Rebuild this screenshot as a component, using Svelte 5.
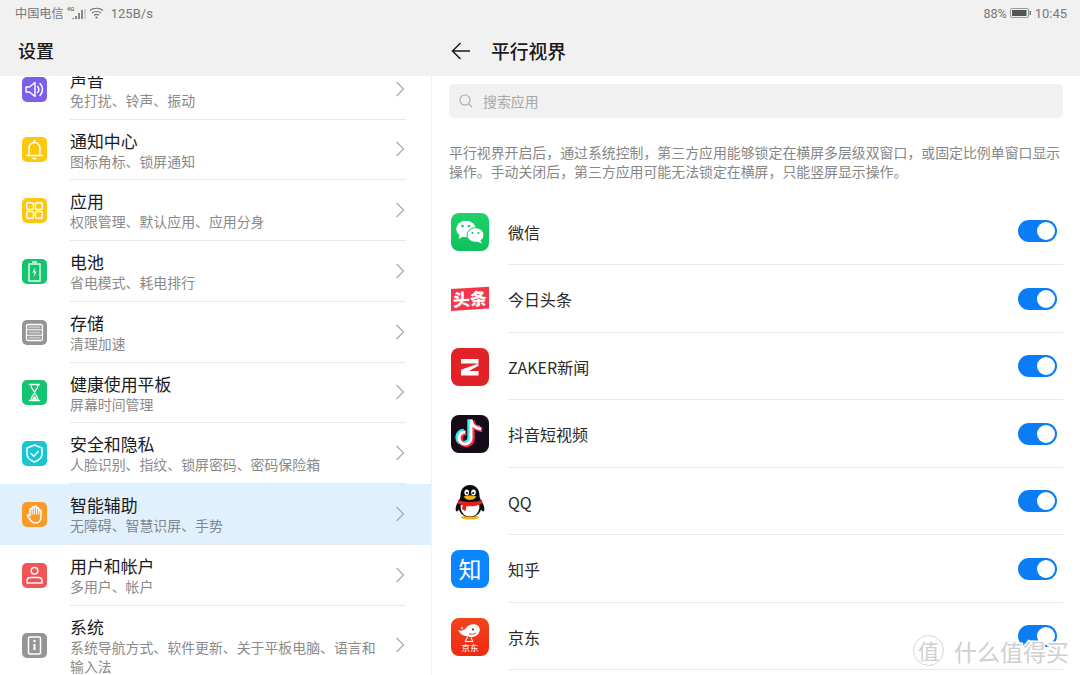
<script>
  const settings = [
    { title: "声音", sub: "免打扰、铃声、振动", color: "#7b5fe8", icon: sound },
    { title: "通知中心", sub: "图标角标、锁屏通知", color: "#fdc70d", icon: bell },
    { title: "应用", sub: "权限管理、默认应用、应用分身", color: "#fdc70d", icon: grid },
    { title: "电池", sub: "省电模式、耗电排行", color: "#13c56f", icon: battery },
    { title: "存储", sub: "清理加速", color: "#959595", icon: storage },
    { title: "健康使用平板", sub: "屏幕时间管理", color: "#13c56f", icon: hourglass },
    { title: "安全和隐私", sub: "人脸识别、指纹、锁屏密码、密码保险箱", color: "#17c6d0", icon: shield },
    { title: "智能辅助", sub: "无障碍、智慧识屏、手势", color: "#fb9a26", icon: hand, active: true },
    { title: "用户和帐户", sub: "多用户、帐户", color: "#f25357", icon: user },
    { title: "系统", sub: "系统导航方式、软件更新、关于平板电脑、语言和输入法", color: "#959595", icon: phone },
  ];

  const apps = [
    { name: "微信", icon: wechat },
    { name: "今日头条", icon: toutiao },
    { name: "ZAKER新闻", icon: zaker },
    { name: "抖音短视频", icon: douyin },
    { name: "QQ", icon: qq },
    { name: "知乎", icon: zhihu },
    { name: "京东", icon: jd },
  ];
</script>

{#snippet sound()}
  <path d="M4 10h3.500l5.500-4.500v14L7.500 15H4z" fill="none" stroke="#fff" stroke-width="1.400" stroke-linejoin="round" />
  <path d="M15.500 9.500a4 4 0 0 1 0 6M18 6.500a8.500 8.500 0 0 1 0 12" fill="none" stroke="#fff" stroke-width="1.500" stroke-linecap="round" />
{/snippet}

{#snippet bell()}
  <path d="M4.500 18.500h16M7 18.500v-7.500a5.500 5.500 0 0 1 11 0v7.500" fill="none" stroke="#fff" stroke-width="1.500" stroke-linecap="round" />
  <path d="M12.500 3.500v2M11 21.500h3" stroke="#fff" stroke-width="1.400" stroke-linecap="round" />
{/snippet}

{#snippet grid()}
  <g fill="none" stroke="#fff" stroke-width="1.400">
    <rect x="4.700" y="4.700" width="6.800" height="6.800" rx="1.200" />
    <rect x="13.500" y="4.700" width="6.800" height="6.800" rx="1.200" />
    <rect x="4.700" y="13.500" width="6.800" height="6.800" rx="1.200" />
    <rect x="13.500" y="13.500" width="6.800" height="6.800" rx="1.200" />
  </g>
{/snippet}

{#snippet battery()}
  <rect x="7" y="5" width="11" height="17" fill="none" stroke="#fff" stroke-width="1.300" />
  <path d="M10 3h5" stroke="#fff" stroke-width="1.300" />
  <path d="M13.500 8.500l-3.200 5h2.200l-1 4.500 3.300-5.500h-2.200z" fill="#fff" />
{/snippet}

{#snippet storage()}
  <rect x="4.500" y="4.500" width="16" height="16" rx="1.500" fill="none" stroke="#fff" stroke-width="1.300" />
  <path d="M5 9.700h15M5 15.300h15" stroke="#fff" stroke-width="1.100" />
  <path d="M6.500 7.200h12M6.500 12.500h12M6.500 17.800h12" stroke="#fff" stroke-width="2" opacity=".45" />
{/snippet}

{#snippet hourglass()}
  <path d="M7.500 4.500h10M7.500 20.500h10" stroke="#fff" stroke-width="1.500" stroke-linecap="round" />
  <path d="M9 5c0 4 3 5 3.500 7.500C13 10 16 9 16 5M9 20c0-4 3-5 3.500-7.500C13 15 16 16 16 20z" fill="none" stroke="#fff" stroke-width="1.200" />
  <path d="M10 19.500c.5-2 2-3 2.500-3.500.5.500 2 1.500 2.500 3.500z" fill="#fff" />
{/snippet}

{#snippet shield()}
  <path d="M12.500 4l7.500 3v6c0 4-3.500 6.500-7.500 8-4-1.500-7.500-4-7.500-8V7z" fill="none" stroke="#fff" stroke-width="1.500" stroke-linejoin="round" />
  <path d="M9 12.500l2.800 2.800 4.400-4.800" fill="none" stroke="#fff" stroke-width="1.500" stroke-linecap="round" stroke-linejoin="round" />
{/snippet}

{#snippet hand()}
  <path d="M8 14V7.500a1.100 1.100 0 0 1 2.200 0V5.800a1.100 1.100 0 0 1 2.200 0v-.6a1.100 1.100 0 0 1 2.200 0v1.600a1.100 1.100 0 0 1 2.200 0V9a1.100 1.100 0 0 1 2.200 0v6c0 3.500-2.300 6-5.500 6-2.500 0-3.800-1-4.800-2.500l-3-4.200c-.8-1.200.8-2.300 1.800-1.300z" fill="none" stroke="#fff" stroke-width="1.500" stroke-linejoin="round" />
  <path d="M10.200 8v4.500M12.400 6v6.500M14.600 6.500v6M16.800 7v5.500" stroke="#fff" stroke-width="1.100" />
{/snippet}

{#snippet user()}
  <circle cx="12.500" cy="7.800" r="3.300" fill="none" stroke="#fff" stroke-width="1.500" />
  <path d="M5 20v-2c0-2 1.500-3.500 3.500-3.500h8c2 0 3.500 1.500 3.500 3.500v2z" fill="none" stroke="#fff" stroke-width="1.500" stroke-linejoin="round" />
{/snippet}

{#snippet phone()}
  <rect x="6.500" y="4" width="12" height="17" rx="1.500" fill="none" stroke="#fff" stroke-width="1.500" />
  <path d="M12.500 11v6" stroke="#fff" stroke-width="2.200" />
  <circle cx="12.500" cy="8" r="1.300" fill="#fff" />
{/snippet}

{#snippet wechat()}
  <defs>
    <linearGradient id="wx" x1="0" y1="0" x2="0" y2="1">
      <stop offset="0" stop-color="#1ed36b" />
      <stop offset="1" stop-color="#0fc05c" />
    </linearGradient>
  </defs>
  <rect width="38" height="38" rx="8" fill="url(#wx)" />
  <ellipse cx="15" cy="16" rx="9.800" ry="8.300" fill="#fff" />
  <path d="M9 21l-1.500 5 5.500-3z" fill="#fff" />
  <ellipse cx="24.500" cy="22" rx="8.500" ry="7.300" fill="#fff" stroke="#16ca64" stroke-width="1" />
  <path d="M29 27l2 3.500-5-2z" fill="#fff" />
  <circle cx="11.500" cy="13" r="1.300" fill="#15c560" />
  <circle cx="18" cy="13" r="1.300" fill="#15c560" />
  <circle cx="21.500" cy="20" r="1.100" fill="#15c560" />
  <circle cx="27.500" cy="20" r="1.100" fill="#15c560" />
{/snippet}

{#snippet toutiao()}
  <path d="M0 9L38 6.700V28.500L0 31z" fill="#f5364a" />
  <text x="19" y="25.500" text-anchor="middle" font-size="17" font-weight="900" fill="#fff" transform="rotate(-3 19 19)" font-family="'Noto Sans CJK SC', sans-serif">头条</text>
{/snippet}

{#snippet zaker()}
  <rect width="38" height="38" rx="8" fill="#e22226" />
  <path d="M10 11h17.500v4.500H10zM10 23h17.500v4.500H10z" fill="#fff" />
  <path d="M27.500 15.500v2.200L18 23h-8v-1.200z" fill="#fff" />
{/snippet}

{#snippet douyin()}
  <rect width="38" height="38" rx="8" fill="#160b18" />
  <g fill="none" stroke-width="5">
    <path d="M20 5v18a6 6 0 1 1-6-6M20 5c.5 5 4.500 8.500 10 9" stroke="#25f4ee" transform="translate(-1.200 -.8)" />
    <path d="M20 5v18a6 6 0 1 1-6-6M20 5c.5 5 4.500 8.500 10 9" stroke="#fe2c55" transform="translate(1.200 .8)" />
    <path d="M20 5v18a6 6 0 1 1-6-6M20 5c.5 5 4.500 8.500 10 9" stroke="#fff" stroke-width="3" />
  </g>
{/snippet}

{#snippet qq()}
  <ellipse cx="19" cy="34.500" rx="9" ry="2" fill="#fbb117" />
  <path d="M19 2c-6 0-9.500 4.500-9.500 10.500 0 2-.5 3-2 5.500-2.500 4-3.500 8-2.500 10 .5 1 1.500.5 3-1.500 1 4 5 7.500 11 7.500s10-3.500 11-7.500c1.500 2 2.500 2.500 3 1.500 1-2 0-6-2.500-10-1.500-2.500-2-3.500-2-5.500C28.500 6.500 25 2 19 2z" fill="#0a0a0a" />
  <path d="M10.500 20c-1.500 3-1 6.500.5 9 1.500 3 4.500 4.500 8 4.500s6.500-1.500 8-4.500c1.500-2.500 2-6 .5-9z" fill="#fff" />
  <ellipse cx="15.700" cy="9.500" rx="2.300" ry="3" fill="#fff" />
  <ellipse cx="22.500" cy="9.500" rx="2.300" ry="3" fill="#fff" />
  <circle cx="16" cy="10" r="1.100" fill="#111" />
  <circle cx="22.200" cy="10" r="1.100" fill="#111" />
  <path d="M12.500 13.500c3-1.500 10-1.500 13 0-1.500 2.500-4 3.500-6.500 3.500s-5-1-6.500-3.500z" fill="#fbb117" />
  <path d="M7 17c7 2.500 17 2.500 24 0l.5 3.500c-5 2.500-11 3.200-16 2.700l-1 5-3.500-2.200.8-3.800c-1.800-.3-3-.7-4.800-1.700z" fill="#e2231a" />
{/snippet}

{#snippet zhihu()}
  <rect width="38" height="38" rx="8" fill="#0a84ff" />
  <text x="19" y="28" text-anchor="middle" font-size="23" fill="#fff" font-family="'Noto Sans CJK SC', sans-serif">知</text>
{/snippet}

{#snippet jd()}
  <defs>
    <linearGradient id="jdbg" x1="0" y1="0" x2="0" y2="1">
      <stop offset="0" stop-color="#f4431c" />
      <stop offset="1" stop-color="#ee2a15" />
    </linearGradient>
  </defs>
  <rect width="38" height="38" rx="8" fill="url(#jdbg)" />
  <path d="M7 12c3 1.500 5.500.5 7.500-1.500 1.500-3 6-5 10-4 3.500 1 5 4 4 7-1 3.500-4.500 5.500-8.500 5.500-1.500 0-3-.3-4.200-.8C11.500 17.500 8.500 15.500 7 12z" fill="#fff" />
  <path d="M12 10l-2-1.500 1 3.500z" fill="#fff" />
  <path d="M16.500 19l-2.500 5M20 19.500l2 4.500M15 23.500h7" stroke="#fff" stroke-width="1.100" fill="none" />
  <circle cx="22" cy="11.500" r="1.100" fill="#333" />
  <path d="M18 15.500c2 1 5 1 7-.5" stroke="#e33" stroke-width="1" fill="none" />
  <text x="19" y="33" text-anchor="middle" font-size="8.500" fill="#fff" font-family="'Noto Sans CJK SC', sans-serif">京东</text>
{/snippet}

<div class="page">
  <div class="statusbar">
    <div class="status-left">
      <span class="carrier">中国电信</span>
      <span class="signal">
        <span class="tag">4G</span>
        <svg width="14" height="12" viewBox="0 0 14 12">
          <path d="M1 10v1M4 8v3M7 5v6M10 2v9" stroke="#6f6f6f" stroke-width="1.600" />
          <path d="M13 1v10" stroke="#bbb" stroke-width="1.200" />
        </svg>
      </span>
      <svg class="wifi" width="15" height="12" viewBox="0 0 15 12">
        <path d="M1 3.500c3.500-3 9.500-3 13 0M3 6c2.500-2 6.500-2 9 0M5 8.300c1.500-1 3.500-1 5 0" fill="none" stroke="#6f6f6f" stroke-width="1.200" />
        <circle cx="7.500" cy="10.500" r="1.100" fill="#6f6f6f" />
      </svg>
      <span class="speed">125B/s</span>
    </div>
    <div class="status-right">
      <span class="pct">88%</span>
      <svg width="21" height="10" viewBox="0 0 21 10">
        <rect x=".5" y=".5" width="18" height="9" rx="1.500" fill="none" stroke="#9a9a9a" />
        <rect x="2" y="2" width="14.500" height="6" fill="#555" />
        <rect x="19.500" y="3" width="1.500" height="4" fill="#777" />
      </svg>
      <span class="clock">10:45</span>
    </div>
  </div>

  <div class="panes">
    <section class="left">
      <header class="head"><h1>设置</h1></header>
      <div class="scroll">
        <ul class="settings">
          {#each settings as item}
            <li class="row" class:active={item.active}>
              <svg class="tile" width="25" height="25" viewBox="0 0 25 25">
                <rect width="25" height="25" rx="5" fill={item.color} />
                {@render item.icon()}
              </svg>
              <div class="row-body">
                <div class="row-text">
                  <div class="title">{item.title}</div>
                  <div class="sub">{item.sub}</div>
                </div>
                <svg class="chev" width="10" height="18" viewBox="0 0 10 18">
                  <path d="M1.500 2l7 7-7 7" fill="none" stroke="#ababab" stroke-width="1.300" />
                </svg>
              </div>
            </li>
          {/each}
        </ul>
      </div>
    </section>

    <section class="right">
      <header class="head">
        <svg class="back" width="20" height="18" viewBox="0 0 20 18">
          <path d="M19 9H1.500M9.500 1l-8 8 8 8" fill="none" stroke="#1a1a1a" stroke-width="1.500" />
        </svg>
        <h2>平行视界</h2>
      </header>
      <div class="content">
        <div class="search">
          <svg width="14" height="14" viewBox="0 0 14 14">
            <circle cx="6" cy="6" r="5" fill="none" stroke="#a8a8a8" stroke-width="1.100" />
            <path d="M9.800 9.800l3.200 3.200" stroke="#a8a8a8" stroke-width="1.100" />
          </svg>
          <span>搜索应用</span>
        </div>
        <p class="desc">平行视界开启后，通过系统控制，第三方应用能够锁定在横屏多层级双窗口，或固定比例单窗口显示操作。手动关闭后，第三方应用可能无法锁定在横屏，只能竖屏显示操作。</p>
        <ul class="apps">
          {#each apps as app}
            <li class="app">
              <svg class="app-icon" width="38" height="38" viewBox="0 0 38 38">
                {@render app.icon()}
              </svg>
              <div class="app-body">
                <span class="app-name">{app.name}</span>
                <span class="toggle"><span class="knob"></span></span>
              </div>
            </li>
          {/each}
        </ul>
      </div>
    </section>
  </div>

  <div class="watermark">
    <span class="seal">值</span>
    <span class="brand">什么值得买</span>
  </div>
</div>

<style>
  :global(body) {
    background: #fff;
  }

  .page {
    position: relative;
    width: 1080px;
    height: 675px;
    overflow: hidden;
    display: flex;
    flex-direction: column;
    background: #fff;
    color: #1a1a1a;
    font-family: "Noto Sans CJK SC", "Noto Sans", sans-serif;
  }

  ul {
    list-style: none;
    margin: 0;
    padding: 0;
  }

  .statusbar {
    height: 26px;
    flex: none;
    padding: 0 13px 0 15px;
    display: flex;
    justify-content: space-between;
    align-items: center;
    background: #f1f1f1;
    color: #777;
    font-size: 12.2px;
  }

  .status-left,
  .status-right {
    display: flex;
    align-items: center;
  }

  .signal {
    position: relative;
    width: 22px;
    height: 14px;
    display: flex;
    align-items: flex-end;
    justify-content: flex-end;
    margin-right: 1px;
  }

  .tag {
    position: absolute;
    left: 3px;
    top: -1px;
    font: 700 6px/8px Roboto, sans-serif;
  }

  .wifi {
    margin-left: 2px;
  }

  .speed {
    margin-left: 7px;
    font: 13px Roboto, sans-serif;
  }

  .pct {
    font: 12.5px Roboto, sans-serif;
    margin-right: 3px;
  }

  .clock {
    font: 13px Roboto, sans-serif;
    margin-left: 4px;
  }

  .panes {
    flex: 1;
    min-height: 0;
    display: flex;
  }

  .left {
    width: 432px;
    flex: none;
    display: flex;
    flex-direction: column;
    border-right: 1px solid #f2f2f2;
    box-sizing: border-box;
  }

  .right {
    flex: 1;
    min-width: 0;
    display: flex;
    flex-direction: column;
  }

  .head {
    height: 50px;
    flex: none;
    display: flex;
    align-items: center;
    background: #f1f1f1;
  }

  .left .head {
    padding-left: 18px;
  }

  .right .head {
    padding-left: 19px;
  }

  h1,
  h2 {
    margin: 0 0 2px;
    font-weight: 500;
    color: #1a1a1a;
  }

  h1 {
    font-size: 18px;
  }

  h2 {
    margin-left: 20px;
    font-size: 18.8px;
  }

  .scroll {
    flex: 1;
    min-height: 0;
    overflow: hidden;
  }

  .settings {
    margin-top: -17.25px;
  }

  .row {
    min-height: 60.75px;
    box-sizing: border-box;
    padding-left: 22px;
    display: flex;
    align-items: center;
  }

  .row.active {
    background: #e1f0fd;
  }

  .tile {
    flex: none;
    margin-right: 23px;
  }

  .row-body {
    flex: 1;
    min-width: 0;
    align-self: stretch;
    margin-right: 25px;
    padding-right: 1px;
    display: flex;
    align-items: center;
    border-bottom: 1px solid #e9e9e9;
  }

  .row-text {
    flex: 1;
    min-width: 0;
    padding: 10px 14px 8.75px 0;
  }

  .title {
    font-size: 16.9px;
    line-height: 22px;
    color: #1a1a1a;
  }

  .sub {
    font-size: 13.9px;
    line-height: 19px;
    color: #8a8a8a;
  }

  .active .sub {
    color: #7f878e;
  }

  .chev {
    flex: none;
  }

  .content {
    flex: 1;
    min-height: 0;
    padding: 8px 17px 0 17px;
  }

  .search {
    height: 34px;
    box-sizing: border-box;
    padding-left: 10px;
    display: flex;
    align-items: center;
    gap: 10px;
    border-radius: 5px;
    background: #f1f1f1;
    color: #a8a8a8;
    font-size: 13.9px;
  }

  .desc {
    margin: 25px -1px 0 0;
    font-size: 13.9px;
    line-height: 19px;
    color: #868686;
  }

  .apps {
    margin-top: 16.75px;
  }

  .app {
    height: 67.5px;
    box-sizing: border-box;
    padding-left: 2px;
    display: flex;
    align-items: center;
  }

  .app-icon {
    flex: none;
    margin-right: 19px;
  }

  .app-body {
    flex: 1;
    align-self: stretch;
    padding-right: 6px;
    display: flex;
    justify-content: space-between;
    align-items: center;
    border-bottom: 1px solid #e9e9e9;
  }

  .app-name {
    padding-top: 1px;
    font-size: 16px;
    color: #2a2a2a;
  }

  .toggle {
    width: 39px;
    height: 22px;
    box-sizing: border-box;
    padding: 2px;
    display: flex;
    justify-content: flex-end;
    border-radius: 11px;
    background: #0a7df5;
  }

  .knob {
    width: 18px;
    height: 18px;
    border-radius: 50%;
    background: #fff;
  }

  /* photo site stamp, sits over the last row */
  .watermark {
    position: absolute;
    left: 913px;
    top: 635px;
    display: flex;
    align-items: center;
    gap: 10px;
    color: #cfcfcf;
  }

  .seal {
    width: 29px;
    height: 29px;
    border: 1.500px solid #d6d6d6;
    border-radius: 50%;
    display: flex;
    align-items: center;
    justify-content: center;
    font-size: 21px;
    line-height: 1;
  }

  .brand {
    font-size: 23px;
    line-height: 30px;
    -webkit-text-stroke: 3px #fff;
    paint-order: stroke fill;
  }
</style>
